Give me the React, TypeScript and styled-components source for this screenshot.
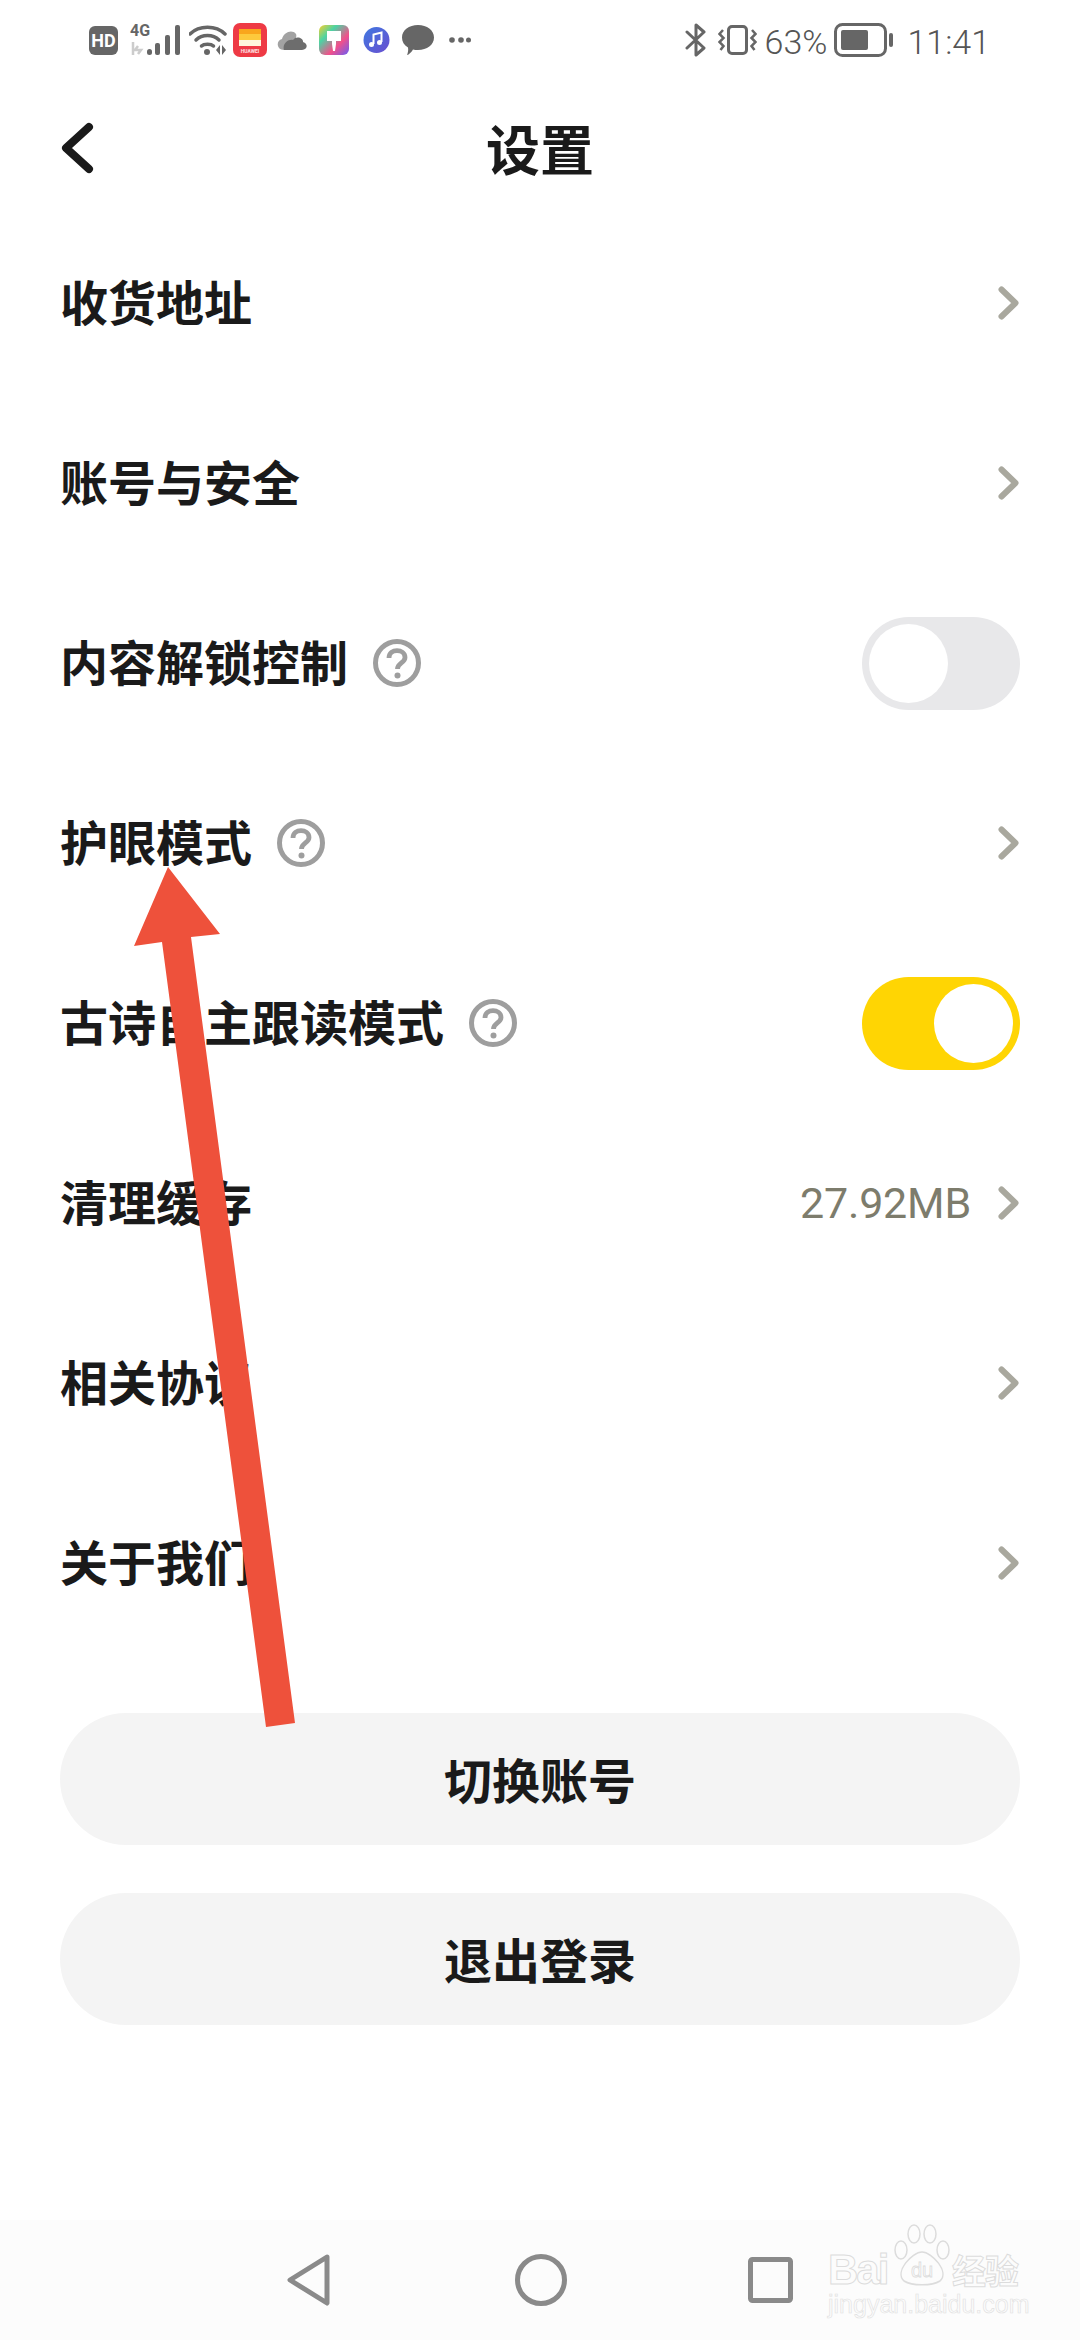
import React from 'react';
import styled, { createGlobalStyle } from 'styled-components';

const GlobalStyle = createGlobalStyle`
  html, body {
    margin: 0;
    padding: 0;
    background: #fff;
  }
  * {
    box-sizing: border-box;
  }
`;

const Page = styled.div`
  position: relative;
  width: 1080px;
  height: 2340px;
  display: flex;
  flex-direction: column;
  overflow: hidden;
  background: #fff;
  color: #1a1a1a;
  font-family: 'Noto Sans CJK SC', 'Noto Sans', sans-serif;
`;

const StatusBar = styled.div`
  height: 86px;
  padding: 0 90px 6px 89px;
  display: flex;
  align-items: center;
  justify-content: space-between;
  color: #666;
`;

const StatusGroup = styled.div`
  display: flex;
  align-items: center;
`;

const HdBadge = styled.div`
  width: 29px;
  height: 29px;
  border-radius: 6px;
  background: #666;
  color: #fff;
  display: flex;
  align-items: center;
  justify-content: center;
  font-family: Roboto, 'Liberation Sans', sans-serif;
  font-size: 18px;
  font-weight: 700;
  line-height: 29px;
`;

const NetworkLabel = styled.div`
  position: absolute;
  left: 0;
  top: 0;
  font-family: Roboto, 'Liberation Sans', sans-serif;
  font-size: 16px;
  font-weight: 700;
  line-height: 14px;
  color: #666;
`;

const SignalBox = styled.div`
  position: relative;
  flex: none;
  width: 51px;
  height: 32px;
  margin-left: 12px;
`;

const StatusIcon = styled.svg<{ $gap?: number }>`
  display: block;
  flex: none;
  margin-left: ${props => props.$gap ?? 0}px;
`;

const StatusText = styled.span<{ $gap?: number }>`
  margin-left: ${props => props.$gap ?? 0}px;
  padding-top: 3px;
  font-family: Roboto, 'Liberation Sans', sans-serif;
  font-size: 34px;
  font-weight: 300;
  line-height: 40px;
  color: #555;
`;

const Header = styled.div`
  height: 127px;
  padding: 0 60px;
  display: flex;
  align-items: center;
  position: relative;
  justify-content: center;
`;

const BackIcon = styled.svg`
  position: absolute;
  left: 60px;
  top: 36px;
`;

const Title = styled.div`
  font-size: 54px;
  font-weight: 700;
  line-height: 60px;
  padding-bottom: 4px;
`;

const List = styled.div`
  display: flex;
  flex-direction: column;
`;

const Row = styled.div`
  height: 180px;
  padding: 0 60px;
  display: flex;
  align-items: center;
`;

const RowLabel = styled.div`
  font-size: 48px;
  font-weight: 700;
  line-height: 60px;
  padding-bottom: 6px;
  color: #1a1a1a;
`;

const HelpIcon = styled.svg`
  display: block;
  margin-left: 25px;
`;

const RowEnd = styled.div`
  margin-left: auto;
  display: flex;
  align-items: center;
`;

const RowValue = styled.span`
  font-family: Roboto, 'Noto Sans', sans-serif;
  font-size: 43px;
  line-height: 50px;
  letter-spacing: -0.2px;
  color: #7d7c6c;
  margin-right: 27px;
`;

const Chevron = styled.svg`
  display: block;
`;

const Toggle = styled.div<{ $on?: boolean }>`
  width: 158px;
  height: 93px;
  padding: 7px;
  border-radius: 47px;
  display: flex;
  justify-content: ${props => (props.$on ? 'flex-end' : 'flex-start')};
  background: ${props => (props.$on ? '#ffd503' : '#e8e8ea')};
`;

const ToggleKnob = styled.div`
  width: 79px;
  height: 79px;
  border-radius: 50%;
  background: #fff;
`;

const Buttons = styled.div`
  margin-top: 60px;
  padding: 0 60px;
  display: flex;
  flex-direction: column;
  gap: 48px;
`;

const PillButton = styled.div`
  height: 132px;
  padding-bottom: 3px;
  border-radius: 66px;
  background: #f4f4f4;
  display: flex;
  align-items: center;
  justify-content: center;
  font-size: 48px;
  font-weight: 700;
  color: #1a1a1a;
`;

const NavBar = styled.div`
  margin-top: auto;
  height: 120px;
  background: #fcfcfc;
  position: relative;
  display: flex;
  align-items: center;
  padding: 0 0 0 287px;
`;

const NavIcon = styled.svg<{ $gap?: number }>`
  display: block;
  flex: none;
  margin-left: ${props => props.$gap ?? 0}px;
`;

const Watermark = styled.div`
  position: absolute;
  left: 828px;
  top: 4px;
  width: 200px;
  height: 100px;
  color: transparent;
`;

const WatermarkPaw = styled.svg`
  position: absolute;
  left: 64px;
  top: 0;
`;

const WatermarkBrand = styled.div`
  position: absolute;
  left: 0;
  top: 22px;
  font-family: 'Liberation Sans', sans-serif;
  font-size: 42px;
  font-weight: 700;
  line-height: 48px;
  letter-spacing: -2px;
  -webkit-text-stroke: 1px #dcdcdc;
`;

const WatermarkCn = styled.div`
  position: absolute;
  left: 124px;
  top: 26px;
  font-size: 34px;
  font-weight: 700;
  line-height: 40px;
  letter-spacing: -1px;
  -webkit-text-stroke: 1px #dcdcdc;
`;

const WatermarkUrl = styled.div`
  position: absolute;
  left: 0;
  top: 66px;
  font-family: 'Liberation Sans', sans-serif;
  font-size: 25px;
  line-height: 28px;
  -webkit-text-stroke: 0.6px #e0e0e0;
`;

const Annotation = styled.svg`
  position: absolute;
  left: 0;
  top: 0;
  pointer-events: none;
`;

function RowChevron() {
  return (
    <Chevron width="22" height="34" viewBox="0 0 22 34">
      <path d="M3.5 3.5 L17.5 17 L3.5 30.5" fill="none" stroke="#a9a89e" strokeWidth="6" strokeLinecap="round" strokeLinejoin="round" />
    </Chevron>
  );
}

function Help() {
  return (
    <HelpIcon width="48" height="48" viewBox="0 0 48 48">
      <circle cx="24" cy="24" r="21.5" fill="none" stroke="#9e9e9e" strokeWidth="5" />
      <path d="M16 19 C16 9 32 9.5 32 18.5 C32 24 24.5 24 24.5 30" fill="none" stroke="#9e9e9e" strokeWidth="4.8" />
      <circle cx="24.5" cy="36.5" r="3" fill="#9e9e9e" />
    </HelpIcon>
  );
}

function StatusLeft() {
  return (
    <StatusGroup>
      <HdBadge>HD</HdBadge>
      <SignalBox>
        <NetworkLabel>4G</NetworkLabel>
        <svg width="51" height="32" viewBox="0 0 51 32">
          <path d="M3 18v13M8 22l-3 4h6l-3 4" fill="none" stroke="#ccc" strokeWidth="2.5" />
          <rect x="17" y="25" width="5" height="6" rx="2.5" fill="#666" />
          <rect x="25" y="19" width="5" height="12" rx="2" fill="#666" />
          <rect x="35" y="11" width="5" height="20" rx="2" fill="#666" />
          <rect x="45" y="1" width="5" height="30" rx="2" fill="#666" />
        </svg>
      </SignalBox>
      <StatusIcon $gap={8} width="38" height="32" viewBox="0 0 38 32">
        <path d="M1 10 C10 1 27 1 36 10" fill="none" stroke="#666" strokeWidth="3.5" strokeLinecap="round" />
        <path d="M7 16 C13 10 24 10 30 16" fill="none" stroke="#666" strokeWidth="3.5" strokeLinecap="round" />
        <path d="M12.5 22 C15 19.5 22 19.5 24.5 22" fill="none" stroke="#666" strokeWidth="3.5" strokeLinecap="round" />
        <circle cx="18" cy="28" r="3" fill="#666" />
        <path d="M27 26l4-5v10zM33 21l4 5-4 5z" fill="#666" />
      </StatusIcon>
      <StatusIcon $gap={6} width="34" height="34" viewBox="0 0 34 34">
        <rect width="34" height="34" rx="7" fill="#ee3a45" />
        <rect x="6" y="6" width="22" height="5" fill="#f9a61c" />
        <rect x="6" y="11" width="22" height="6" fill="#fdc93c" />
        <rect x="6" y="17" width="22" height="6" fill="#fff6dc" />
        <text x="17" y="30" textAnchor="middle" fontFamily="Roboto, sans-serif" fontSize="5" fontWeight="700" fill="#ffe3e5">HUAWEI</text>
      </StatusIcon>
      <StatusIcon $gap={10} width="30" height="22" viewBox="0 0 30 22">
        <path d="M7 21 C-1 21 -1 11 5 10 C7 3 15 0 19 5 C21 9 14 21 7 21Z" fill="#a2a2a2" />
        <path d="M7 21 C5 15 11 10 16 11 C19 6 27 9 26 13 C32 15 30 21 25 21Z" fill="#6d6d6d" />
      </StatusIcon>
      <StatusIcon $gap={12} width="30" height="30" viewBox="0 0 30 30">
        <defs>
          <linearGradient id="brushBg" x1="0" y1="0" x2="1" y2="1">
            <stop offset="0" stopColor="#f7d02c" />
            <stop offset="0.3" stopColor="#4cd3a4" />
            <stop offset="0.65" stopColor="#f2508a" />
            <stop offset="1" stopColor="#6a5cf5" />
          </linearGradient>
        </defs>
        <rect width="30" height="30" rx="6" fill="url(#brushBg)" />
        <path d="M8 6h14v10h-5v3l-1 7h-2l-1-7v-3H8z" fill="#fff" />
      </StatusIcon>
      <StatusIcon $gap={14} width="27" height="28" viewBox="0 0 27 28">
        <defs>
          <linearGradient id="musicBg" x1="0" y1="0" x2="1" y2="1">
            <stop offset="0" stopColor="#3f78e0" />
            <stop offset="1" stopColor="#6a4fd0" />
          </linearGradient>
        </defs>
        <circle cx="13.5" cy="14" r="13" fill="url(#musicBg)" />
        <path d="M10.5 18V8.5l8-2V16" fill="none" stroke="#fff" strokeWidth="2" />
        <circle cx="8.5" cy="18.5" r="2.5" fill="#fff" />
        <circle cx="16.5" cy="16.5" r="2.5" fill="#fff" />
      </StatusIcon>
      <StatusIcon $gap={12} width="32" height="30" viewBox="0 0 32 30">
        <path d="M16 0 C25 0 32 5 32 12.5 C32 20 25 25 16 25 C14 25 12.5 24.8 11 24.4 C9.5 27 7 29.5 5 30 C6 27.5 6.5 25 6 22.5 C2 20.2 0 16.5 0 12.5 C0 5 7 0 16 0Z" fill="#666" />
      </StatusIcon>
      <StatusIcon $gap={15} width="22" height="6" viewBox="0 0 22 6">
        <circle cx="3" cy="3" r="2.8" fill="#666" />
        <circle cx="12" cy="3" r="2.8" fill="#666" />
        <circle cx="19.5" cy="3" r="2.5" fill="#666" />
      </StatusIcon>
    </StatusGroup>
  );
}

function StatusRight() {
  return (
    <StatusGroup>
      <StatusIcon width="22" height="34" viewBox="0 0 22 34">
        <path d="M2 9 L19 25 L11 32 V2 L19 9 L2 25" fill="none" stroke="#666" strokeWidth="3" strokeLinejoin="round" strokeLinecap="round" />
      </StatusIcon>
      <StatusIcon $gap={11} width="39" height="30" viewBox="0 0 39 30">
        <rect x="10.5" y="1.5" width="18" height="27" rx="3.5" fill="none" stroke="#666" strokeWidth="3" />
        <path d="M5 5 L1.5 9 L5.5 13 L1.5 17 L5.5 21 L2.5 25" fill="none" stroke="#666" strokeWidth="2.5" />
        <path d="M34 5 L37.5 9 L33.5 13 L37.5 17 L33.5 21 L36.5 25" fill="none" stroke="#666" strokeWidth="2.5" />
      </StatusIcon>
      <StatusText $gap={8}>63%</StatusText>
      <StatusIcon $gap={7} width="60" height="34" viewBox="0 0 60 34">
        <rect x="1.5" y="1.5" width="50" height="31" rx="7" fill="none" stroke="#666" strokeWidth="3" />
        <rect x="7" y="7" width="27" height="20" rx="2" fill="#666" />
        <rect x="55" y="10" width="4" height="14" rx="2" fill="#666" />
      </StatusIcon>
      <StatusText $gap={13}>11:41</StatusText>
    </StatusGroup>
  );
}

const App: React.FC = () => {
  return (
    <Page>
      <GlobalStyle />
      <StatusBar>
        <StatusLeft />
        <StatusRight />
      </StatusBar>
      <Header>
        <BackIcon width="34" height="52" viewBox="0 0 34 52">
          <path d="M29 5 L6 26 L29 47" fill="none" stroke="#1a1a1a" strokeWidth="8" strokeLinecap="round" strokeLinejoin="round" />
        </BackIcon>
        <Title>设置</Title>
      </Header>
      <List>
        <Row>
          <RowLabel>收货地址</RowLabel>
          <RowEnd><RowChevron /></RowEnd>
        </Row>
        <Row>
          <RowLabel>账号与安全</RowLabel>
          <RowEnd><RowChevron /></RowEnd>
        </Row>
        <Row>
          <RowLabel>内容解锁控制</RowLabel>
          <Help />
          <RowEnd><Toggle><ToggleKnob /></Toggle></RowEnd>
        </Row>
        <Row>
          <RowLabel>护眼模式</RowLabel>
          <Help />
          <RowEnd><RowChevron /></RowEnd>
        </Row>
        <Row>
          <RowLabel>古诗自主跟读模式</RowLabel>
          <Help />
          <RowEnd><Toggle $on><ToggleKnob /></Toggle></RowEnd>
        </Row>
        <Row>
          <RowLabel>清理缓存</RowLabel>
          <RowEnd>
            <RowValue>27.92MB</RowValue>
            <RowChevron />
          </RowEnd>
        </Row>
        <Row>
          <RowLabel>相关协议</RowLabel>
          <RowEnd><RowChevron /></RowEnd>
        </Row>
        <Row>
          <RowLabel>关于我们</RowLabel>
          <RowEnd><RowChevron /></RowEnd>
        </Row>
      </List>
      <Buttons>
        <PillButton>切换账号</PillButton>
        <PillButton>退出登录</PillButton>
      </Buttons>
      <NavBar>
        <NavIcon width="44" height="52" viewBox="0 0 44 52">
          <path d="M40 3 L3 26 L40 49 Z" fill="none" stroke="#8a8a8a" strokeWidth="5" strokeLinejoin="round" />
        </NavIcon>
        <NavIcon $gap={184} width="52" height="52" viewBox="0 0 52 52">
          <circle cx="26" cy="26" r="23.5" fill="none" stroke="#8a8a8a" strokeWidth="5" />
        </NavIcon>
        <NavIcon $gap={181} width="45" height="46" viewBox="0 0 45 46">
          <rect x="2.5" y="2.5" width="40" height="41" rx="2" fill="none" stroke="#8a8a8a" strokeWidth="5" />
        </NavIcon>
        <Watermark>
          <WatermarkPaw width="60" height="62" viewBox="0 0 60 62">
            <g fill="none" stroke="#dcdcdc" strokeWidth="1.5">
              <ellipse cx="9" cy="26" rx="6" ry="9" />
              <ellipse cx="22" cy="10" rx="6" ry="9" />
              <ellipse cx="38" cy="10" rx="6" ry="9" />
              <ellipse cx="51" cy="26" rx="6" ry="9" />
              <path d="M30 28 C20 28 2 48 12 57 C20 62 40 62 48 57 C58 48 40 28 30 28Z" />
            </g>
            <text x="30" y="53" textAnchor="middle" fontFamily="Liberation Sans, sans-serif" fontSize="20" fill="none" stroke="#dcdcdc" strokeWidth="0.8">du</text>
          </WatermarkPaw>
          <WatermarkBrand>Bai</WatermarkBrand>
          <WatermarkCn>经验</WatermarkCn>
          <WatermarkUrl>jingyan.baidu.com</WatermarkUrl>
        </Watermark>
      </NavBar>
      <Annotation width="1080" height="2340" viewBox="0 0 1080 2340">
        <polygon points="168,867 220,934 191,937 295,1723 266,1727 162,942 134,946" fill="#ee513b" />
      </Annotation>
    </Page>
  );
};

export default App;
